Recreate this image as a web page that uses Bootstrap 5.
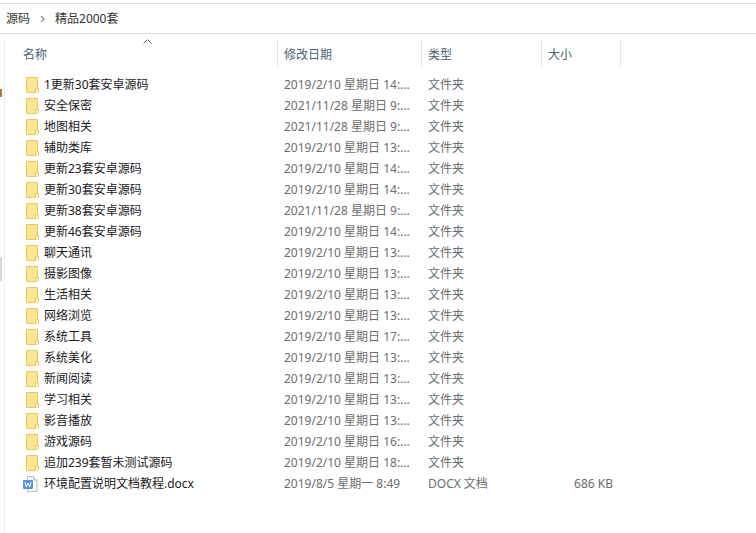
<!DOCTYPE html>
<html lang="zh-CN">
<head>
<meta charset="utf-8">
<title>精品2000套</title>
<link href="https://cdn.jsdelivr.net/npm/bootstrap@5.3.0/dist/css/bootstrap.min.css" rel="stylesheet">
<style>
html,body{height:100%;margin:0;overflow:hidden;background:#fff}
body{font-family:"Noto Sans","Noto Sans CJK SC",sans-serif;font-size:12px;line-height:21px;color:#1a1a1a;width:756px;height:533px;position:relative}
.top-strip{height:4px;border-bottom:1px solid #dcdcdc}
.crumbs{height:30px;border-bottom:1px solid #dcdcdc;padding-left:6px;font-size:12px;color:#333;align-items:center}
.crumbs svg{margin:0 10px 0 10px}
.pane{margin-left:4px;border-left:1px solid #eeeeee;height:498px;padding-left:0}
.heads{height:28px;margin-top:6px;color:#4c607a;position:relative}
.hd{height:27px;border-left:1px solid #e5e5e5;padding-left:6px;line-height:30px}
.hd-name{width:272px;border-left:0;padding-left:18px}
.hd-date{width:144px}.hd-type{width:120px}.hd-size{width:80px;border-right:1px solid #e5e5e5}
.sort{position:absolute;left:138px;top:-1px}
.files{margin-top:6px}
.frow{height:21px;white-space:nowrap}
.fname{width:272px;padding-left:21px;display:flex;align-items:center;color:#1a1a1a}
.fname svg{margin-right:5px;flex:none}
.fname.doc-row{padding-left:18px}
.fname.doc-row svg{margin-right:6px}
.fdate{width:144px;padding-left:7px;color:#6d6d6d}
.ftype{width:120px;padding-left:7px;color:#6d6d6d}
.fsize{width:72px;text-align:right;color:#6d6d6d}
.tick{position:absolute;left:0;width:2px}
.tick-a{top:89px;height:8px;background:#b8793a}
.tick-b{top:257px;height:24px;background:#d9d9d9}
</style>
</head>
<body>
<div class="top-strip"></div>
<div class="crumbs d-flex"><span>源码</span><svg width="5" height="8" viewBox="0 0 5 8"><path d="M1 1l3 3-3 3" fill="none" stroke="#8a8a8a" stroke-width="1.2"/></svg><span>精品2000套</span></div>
<div class="pane">
  <div class="heads d-flex">
    <div class="hd hd-name">名称</div><div class="hd hd-date">修改日期</div><div class="hd hd-type">类型</div><div class="hd hd-size">大小</div>
    <svg class="sort" width="9" height="5" viewBox="0 0 9 5"><path d="M.5 4.500l4-4 4 4" fill="none" stroke="#707070"/></svg>
  </div>
  <div class="files" id="files"></div>
</div>
<div class="tick tick-a"></div><div class="tick tick-b"></div>
<script>
var rows=[["1更新30套安卓源码","2019/2/10 星期日 14:..."],["安全保密","2021/11/28 星期日 9:..."],["地图相关","2021/11/28 星期日 9:..."],["辅助类库","2019/2/10 星期日 13:..."],["更新23套安卓源码","2019/2/10 星期日 14:..."],["更新30套安卓源码","2019/2/10 星期日 14:..."],["更新38套安卓源码","2021/11/28 星期日 9:..."],["更新46套安卓源码","2019/2/10 星期日 14:..."],["聊天通讯","2019/2/10 星期日 13:..."],["摄影图像","2019/2/10 星期日 13:..."],["生活相关","2019/2/10 星期日 13:..."],["网络浏览","2019/2/10 星期日 13:..."],["系统工具","2019/2/10 星期日 17:..."],["系统美化","2019/2/10 星期日 13:..."],["新闻阅读","2019/2/10 星期日 13:..."],["学习相关","2019/2/10 星期日 13:..."],["影音播放","2019/2/10 星期日 13:..."],["游戏源码","2019/2/10 星期日 16:..."],["追加239套暂未测试源码","2019/2/10 星期日 18:..."]];
var folder='<svg width="13" height="16" viewBox="0 0 13 16"><path d="M.5.5h11v15H.5z" fill="#ffe596" stroke="#edc850"/><path d="M9.500 15.500v-4h3v4" fill="#fff6d0" stroke="#edc850"/></svg>';
var doc='<svg width="15" height="16" viewBox="0 0 15 16"><path d="M4.500.5h6l3.500 3.500v11.500h-9.500z" fill="#fff" stroke="#b9bcc2"/><path d="M10.500.5v3.500h3.500" fill="#e8e8e8" stroke="#b9bcc2"/><rect x="0" y="4" width="10" height="9" rx="1" fill="#5b8fe6"/><path d="M2 6l1.300 5 1.700-4 1.700 4 1.300-5" fill="none" stroke="#fff"/></svg>';
var h='';
rows.forEach(function(r){h+='<div class="frow d-flex"><div class="fname">'+folder+'<span>'+r[0]+'</span></div><div class="fdate">'+r[1]+'</div><div class="ftype">文件夹</div></div>';});
h+='<div class="frow d-flex"><div class="fname doc-row">'+doc+'<span>环境配置说明文档教程.docx</span></div><div class="fdate">2019/8/5 星期一 8:49</div><div class="ftype">DOCX 文档</div><div class="fsize">686 KB</div></div>';
document.getElementById('files').innerHTML=h;
</script>
<script src="https://cdn.jsdelivr.net/npm/bootstrap@5.3.0/dist/js/bootstrap.bundle.min.js"></script>
</body>
</html>
